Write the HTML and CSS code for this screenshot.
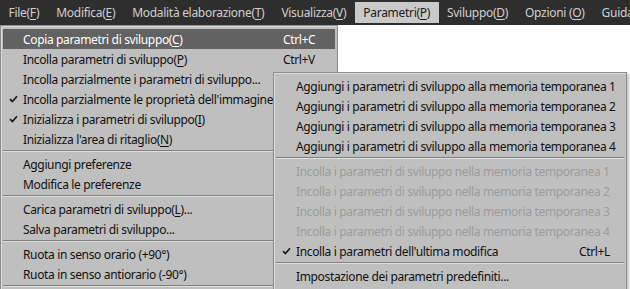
FILE: index.html
```html
<!DOCTYPE html>
<html lang="it">
<head>
    <meta charset="UTF-8">
    <title>Parametri</title>
    <link rel="stylesheet" href="styles.css">
</head>
<body>
    <div class="menubar">
        <span class="top-item">File(<u>F</u>)</span>
        <span class="top-item">Modifica(<u>E</u>)</span>
        <span class="top-item">Modalità elaborazione(<u>T</u>)</span>
        <span class="top-item">Visualizza(<u>V</u>)</span>
        <span class="top-item open">Parametri(<u>P</u>)</span>
        <span class="top-item">Sviluppo(<u>D</u>)</span>
        <span class="top-item">Opzioni (<u>O</u>)</span>
        <span class="top-item">Guida</span>
    </div>

    <div class="menu main-menu">
        <div class="item has-key active"><span class="label">Copia parametri di sviluppo(<u>C</u>)</span><span class="key">Ctrl+C</span></div>
        <div class="item has-key"><span class="label">Incolla parametri di sviluppo(<u>P</u>)</span><span class="key">Ctrl+V</span></div>
        <div class="item"><span class="label">Incolla parzialmente i parametri di sviluppo...</span></div>
        <div class="item"><span class="check"><svg width="9" height="8" viewBox="0 0 9 8"><path d="M1 4.2 L3.4 6.6 L8 1.2" fill="none" stroke="#1a1a1a" stroke-width="1.7"/></svg></span><span class="label">Incolla parzialmente le proprietà dell'immagine</span></div>
        <div class="item"><span class="check"><svg width="9" height="8" viewBox="0 0 9 8"><path d="M1 4.2 L3.4 6.6 L8 1.2" fill="none" stroke="#1a1a1a" stroke-width="1.7"/></svg></span><span class="label">Inizializza i parametri di sviluppo(<u>I</u>)</span></div>
        <div class="item"><span class="label">Inizializza l'area di ritaglio(<u>N</u>)</span></div>
        <div class="sep"></div>
        <div class="item"><span class="label">Aggiungi preferenze</span></div>
        <div class="item"><span class="label">Modifica le preferenze</span></div>
        <div class="sep"></div>
        <div class="item"><span class="label">Carica parametri di sviluppo(<u>L</u>)...</span></div>
        <div class="item"><span class="label">Salva parametri di sviluppo...</span></div>
        <div class="sep"></div>
        <div class="item"><span class="label">Ruota in senso orario (+90°)</span></div>
        <div class="item"><span class="label">Ruota in senso antiorario (-90°)</span></div>
        <div class="sep"></div>
    </div>

    <div class="menu sub-menu">
        <div class="item"><span class="label">Aggiungi i parametri di sviluppo alla memoria temporanea 1</span></div>
        <div class="item"><span class="label">Aggiungi i parametri di sviluppo alla memoria temporanea 2</span></div>
        <div class="item"><span class="label">Aggiungi i parametri di sviluppo alla memoria temporanea 3</span></div>
        <div class="item"><span class="label">Aggiungi i parametri di sviluppo alla memoria temporanea 4</span></div>
        <div class="sep"></div>
        <div class="item disabled"><span class="label">Incolla i parametri di sviluppo nella memoria temporanea 1</span></div>
        <div class="item disabled"><span class="label">Incolla i parametri di sviluppo nella memoria temporanea 2</span></div>
        <div class="item disabled"><span class="label">Incolla i parametri di sviluppo nella memoria temporanea 3</span></div>
        <div class="item disabled"><span class="label">Incolla i parametri di sviluppo nella memoria temporanea 4</span></div>
        <div class="item has-key"><span class="check"><svg width="9" height="8" viewBox="0 0 9 8"><path d="M1 4.2 L3.4 6.6 L8 1.2" fill="none" stroke="#1a1a1a" stroke-width="1.7"/></svg></span><span class="label">Incolla i parametri dell'ultima modifica</span><span class="key">Ctrl+L</span></div>
        <div class="sep"></div>
        <div class="item"><span class="label">Impostazione dei parametri predefiniti...</span></div>
    </div>
</body>
</html>
```

FILE: styles.css
```css
body {
    margin: 0;
    background-color: white;
    font-family: "Noto Sans", "Open Sans", sans-serif;
    font-size: 12px;
    letter-spacing: -0.35px;
    height: 289px;
    overflow: hidden;
    position: relative;
}

u {
    text-decoration-thickness: 1px;
    text-underline-offset: 2px;
}

.menubar {
    display: flex;
    height: 25px;
    align-items: center;
    background-color: #2e2e2e;
    color: #cfcfcf;
    white-space: nowrap;
    letter-spacing: -0.3px;
}

.top-item {
    padding: 0 8.5px;
    line-height: 21px;
}

.top-item.open {
    background-color: #c9c9c9;
    color: #1c1c1c;
}

.menu {
    position: absolute;
    background-color: #bfbfbf;
    color: #111;
    border: 1px solid #8c8c8c;
    box-shadow: inset 1px 1px 0 #dadada;
    padding: 3px 2px;
    white-space: nowrap;
}

.main-menu {
    top: 25px;
    left: 0;
    width: 332px;
    padding-bottom: 0;
    border-bottom: none;
}

.sub-menu {
    top: 72px;
    left: 273px;
    width: 348px;
    box-shadow: inset 1px 1px 0 #dadada, 2px 2px 3px rgba(0, 0, 0, 0.25);
}

.item {
    display: grid;
    grid-template-columns: 20px 1fr 52px;
    height: 20px;
    align-items: center;
}

.sub-menu .item {
    grid-template-columns: 20px 1fr 45px;
}

.check {
    grid-column: 1;
    grid-row: 1;
    padding-left: 6px;
    display: flex;
}

.label {
    grid-column: 2 / 4;
    grid-row: 1;
}

.item.has-key .label {
    grid-column: 2;
}

.key {
    grid-column: 3;
    grid-row: 1;
}

.item.active {
    background-color: #626262;
    color: white;
}

.item.disabled {
    color: #9c9c9c;
}

.sep {
    height: 0;
    border-top: 1px solid #808080;
    border-bottom: 1px solid #dedede;
    margin: 1px 0 2px;
}
```
